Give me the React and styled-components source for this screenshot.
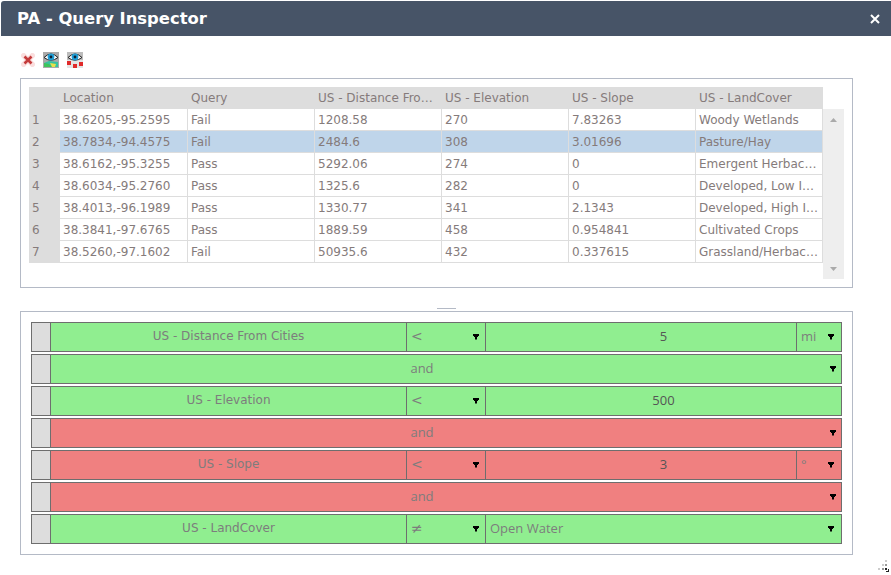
import React from 'react'
import styled, { createGlobalStyle } from 'styled-components'

const columns = ['Location', 'Query', 'US - Distance From Cities', 'US - Elevation', 'US - Slope', 'US - LandCover']

const results = [
  ['38.6205,-95.2595', 'Fail', '1208.58', '270', '7.83263', 'Woody Wetlands'],
  ['38.7834,-94.4575', 'Fail', '2484.6', '308', '3.01696', 'Pasture/Hay'],
  ['38.6162,-95.3255', 'Pass', '5292.06', '274', '0', 'Emergent Herbaceous Wetlands'],
  ['38.6034,-95.2760', 'Pass', '1325.6', '282', '0', 'Developed, Low Intensity'],
  ['38.4013,-96.1989', 'Pass', '1330.77', '341', '2.1343', 'Developed, High Intensity'],
  ['38.3841,-97.6765', 'Pass', '1889.59', '458', '0.954841', 'Cultivated Crops'],
  ['38.5260,-97.1602', 'Fail', '50935.6', '432', '0.337615', 'Grassland/Herbaceous'],
]

const GlobalStyle = createGlobalStyle`
  html, body {
    margin: 0;
    background: #fff;
  }
  body {
    font-family: "DejaVu Sans", Verdana, sans-serif;
    font-size: 12px;
    color: #857b7b;
  }
`

const Dialog = styled.div`
  position: relative;
  width: 891px;
  height: 575px;
  overflow: hidden;
  padding-top: 1px;
  box-sizing: border-box;
`

const TitleBar = styled.div`
  height: 35px;
  margin-left: 1px;
  padding: 0 11px 0 16px;
  background: #475467;
  border-top-left-radius: 3px;
  display: flex;
  align-items: center;
  justify-content: space-between;
  color: #fff;
`

const Title = styled.h1`
  margin: 0;
  font-size: 16.4px;
  font-weight: bold;
`

const CloseIcon = styled.svg`
  width: 10px;
  height: 10px;
`

const Toolbar = styled.div`
  height: 42px;
  padding: 5px 0 0 21px;
  display: flex;
  align-items: center;
  gap: 8px;
  box-sizing: border-box;
`

const ToolIcon = styled.svg`
  width: ${(p) => p.$size || 16}px;
  height: ${(p) => p.$size || 16}px;
  display: block;
`

const Panel = styled.section`
  width: 833px;
  margin-left: 20px;
  box-sizing: border-box;
  border: 1px solid #b4bac6;
`

const TablePanel = styled(Panel)`
  height: 210px;
  padding: 8px 0 0 8px;
`

const Grid = styled.div`
  display: grid;
  width: 815px;
  grid-template-columns: 31px 128px 127px repeat(4, 127px) 21px;
  grid-auto-rows: 22px;
`

const HeadCell = styled.div`
  background: #dddddd;
  padding: 0 4px 0 3px;
  line-height: 22px;
  white-space: nowrap;
  overflow: hidden;
  text-overflow: ellipsis;
`

const IndexCell = styled.div`
  background: #dddddd;
  padding-left: 3px;
  line-height: 23px;
`

const Cell = styled.div`
  background: ${(p) => (p.$selected ? '#bfd5ea' : '#fff')};
  border-right: 1px solid #dddddd;
  border-bottom: 1px solid #dddddd;
  box-sizing: border-box;
  padding: 0 3px 0 3px;
  line-height: 23px;
  white-space: nowrap;
  overflow: hidden;
  text-overflow: ellipsis;
`

const HeadGap = styled.div``

const ScrollTrack = styled.div`
  grid-column: 8;
  grid-row: 2 / span 7;
  height: 170px;
  background: #eeeeee;
  display: flex;
  flex-direction: column;
  align-items: center;
  justify-content: space-between;
  padding: 9px 0 8px;
  box-sizing: border-box;
`

const ScrollArrow = styled.svg`
  width: 7px;
  height: 4px;
  display: block;
`

const Splitter = styled.div`
  width: 19px;
  height: 1px;
  margin: 20px 0 2px 437px;
  background: #b4bac6;
`

const QueryPanel = styled(Panel)`
  height: 244px;
  padding: 10px 10px 0;
  display: flex;
  flex-direction: column;
  gap: 2px;
`

const QueryRow = styled.div`
  height: 30px;
  box-sizing: border-box;
  border: 1px solid #6e6e6e;
  display: flex;
  background: ${(p) => (p.$tone === 'red' ? '#f08080' : '#90ee90')};
`

const Handle = styled.div`
  width: 18px;
  flex: none;
  background: #dddddd;
  border-right: 1px solid #6e6e6e;
`

const Field = styled.div`
  width: 355px;
  flex: none;
  box-sizing: border-box;
  text-align: center;
  line-height: 26px;
  color: #7d7d7d;
`

const Select = styled.div`
  position: relative;
  box-sizing: border-box;
  border-left: ${(p) => (p.$first ? 'none' : '1px solid #6e6e6e')};
  width: ${(p) => (p.$width ? `${p.$width}px` : 'auto')};
  flex: ${(p) => (p.$width ? 'none' : '1')};
  padding: ${(p) => (p.$center ? '0 48px 0 0' : '0 0 0 4px')};
  font-family: "Open Sans", "DejaVu Sans", sans-serif;
  font-size: 13px;
  line-height: 27px;
  color: #7d7d7d;
  text-align: ${(p) => (p.$center ? 'center' : 'left')};
`

const OpSymbol = styled.span`
  font-family: "DejaVu Sans", sans-serif;
  font-size: 14px;
  line-height: 26px;
`

const Caret = styled.svg`
  position: absolute;
  right: ${(p) => p.$right || 6}px;
  top: 11px;
  width: 6px;
  height: 6px;
`

const Value = styled.div`
  flex: 1;
  box-sizing: border-box;
  border-left: 1px solid #6e6e6e;
  padding-left: ${(p) => (p.$withUnit ? 45 : 0)}px;
  font-family: "Open Sans", "DejaVu Sans", sans-serif;
  font-size: 13px;
  text-align: center;
  line-height: 27px;
  color: #555;
`

const Grip = styled.svg`
  position: absolute;
  right: 1px;
  bottom: 2px;
  width: 13px;
  height: 14px;
`

function DownCaret({ right }) {
  return (
    <Caret $right={right} viewBox="0 0 6 6">
      <path d="M0 0h6v2H5v1H4v2L3 6 2 5V3H1V2H0z" fill="#000" />
    </Caret>
  )
}

function Eye() {
  return (
    <>
      <path d="M1 5.5Q8 -1.5 15 5.5Q8 11 1 5.5z" fill="#fff" stroke="#222" strokeWidth="1" />
      <circle cx="8" cy="5" r="3.4" fill="#1f9fd8" />
      <circle cx="8" cy="5" r="1.4" fill="#123" />
    </>
  )
}

function QueryRowItem({ tone, field, op, value, unit, and, list }) {
  if (and) {
    return (
      <QueryRow $tone={tone}>
        <Handle />
        <Select $first $center>
          and
          <DownCaret right={5} />
        </Select>
      </QueryRow>
    )
  }
  return (
    <QueryRow $tone={tone}>
      <Handle />
      <Field>{field}</Field>
      <Select $width={79}>
        <OpSymbol>{op}</OpSymbol>
        <DownCaret right={6} />
      </Select>
      {list ? (
        <Select>
          {value}
          <DownCaret right={7} />
        </Select>
      ) : (
        <Value $withUnit={!!unit}>{value}</Value>
      )}
      {unit && (
        <Select $width={45}>
          {unit}
          <DownCaret right={7} />
        </Select>
      )}
    </QueryRow>
  )
}

function App() {
  return (
    <Dialog>
      <GlobalStyle />
      <TitleBar>
        <Title>PA - Query Inspector</Title>
        <CloseIcon viewBox="0 0 10 10">
          <path d="M1 1l8 8M9 1l-8 8" stroke="#fff" strokeWidth="2" />
        </CloseIcon>
      </TitleBar>

      <Toolbar>
        <ToolIcon $size={14} viewBox="0 0 16 16">
          <path d="M3 3l10 10M13 3L3 13" stroke="#fadede" strokeWidth="6" strokeLinecap="round" />
          <path d="M4 4l8 8M12 4l-8 8" stroke="#c43b3b" strokeWidth="3" />
        </ToolIcon>
        <ToolIcon viewBox="0 0 16 16">
          <rect width="16" height="16" fill="#a9a9a9" />
          <Eye />
          <path d="M1 11l5-2 9 1v5H1z" fill="#35c3a0" />
          <path d="M1 11l5 1 3 3H1z" fill="#3fc35a" />
          <path d="M7 11l6 1-1 3H9z" fill="#e8e04a" />
        </ToolIcon>
        <ToolIcon viewBox="0 0 16 16">
          <rect width="16" height="16" fill="#e4e4e4" />
          <rect width="16" height="8" fill="#bcbcbc" />
          <Eye />
          <rect x="0" y="9" width="4" height="4" fill="#e02a2a" />
          <rect x="6" y="12" width="4" height="4" fill="#e02a2a" />
          <rect x="12" y="10" width="4" height="4" fill="#e02a2a" />
        </ToolIcon>
      </Toolbar>

      <TablePanel>
        <Grid>
          <HeadCell />
          {columns.map((c) => (
            <HeadCell key={c}>{c}</HeadCell>
          ))}
          <HeadGap />
          {results.map((row, i) => (
            <React.Fragment key={row[0]}>
              <IndexCell>{i + 1}</IndexCell>
              {row.map((v, j) => (
                <Cell key={j} $selected={i === 1}>
                  {v}
                </Cell>
              ))}
            </React.Fragment>
          ))}
          <ScrollTrack>
            <ScrollArrow viewBox="0 0 7 4">
              <path d="M3.5 0L7 4H0z" fill="#aaa" />
            </ScrollArrow>
            <ScrollArrow viewBox="0 0 7 4">
              <path d="M0 0h7L3.5 4z" fill="#aaa" />
            </ScrollArrow>
          </ScrollTrack>
        </Grid>
      </TablePanel>

      <Splitter />

      <QueryPanel>
        <QueryRowItem tone="green" field="US - Distance From Cities" op="<" value="5" unit="mi" />
        <QueryRowItem tone="green" and />
        <QueryRowItem tone="green" field="US - Elevation" op="<" value="500" />
        <QueryRowItem tone="red" and />
        <QueryRowItem tone="red" field="US - Slope" op="<" value="3" unit="°" />
        <QueryRowItem tone="red" and />
        <QueryRowItem tone="green" field="US - LandCover" op="≠" value="Open Water" list />
      </QueryPanel>

      <Grip viewBox="0 0 13 14">
        <g fill="#999">
          <rect x="8" y="1" width="2" height="2" fill="#ccc" />
          <rect x="5" y="5" width="2" height="2" fill="#ccc" />
          <rect x="8" y="5" width="2" height="2" />
          <rect x="1" y="9" width="2" height="2" fill="#ccc" />
          <rect x="5" y="9" width="2" height="2" />
          <rect x="8" y="9" width="2" height="2" fill="#222" />
          <path d="M12 10v3H9v-1h2v-2z" fill="#222" />
        </g>
      </Grip>
    </Dialog>
  )
}

export default App
